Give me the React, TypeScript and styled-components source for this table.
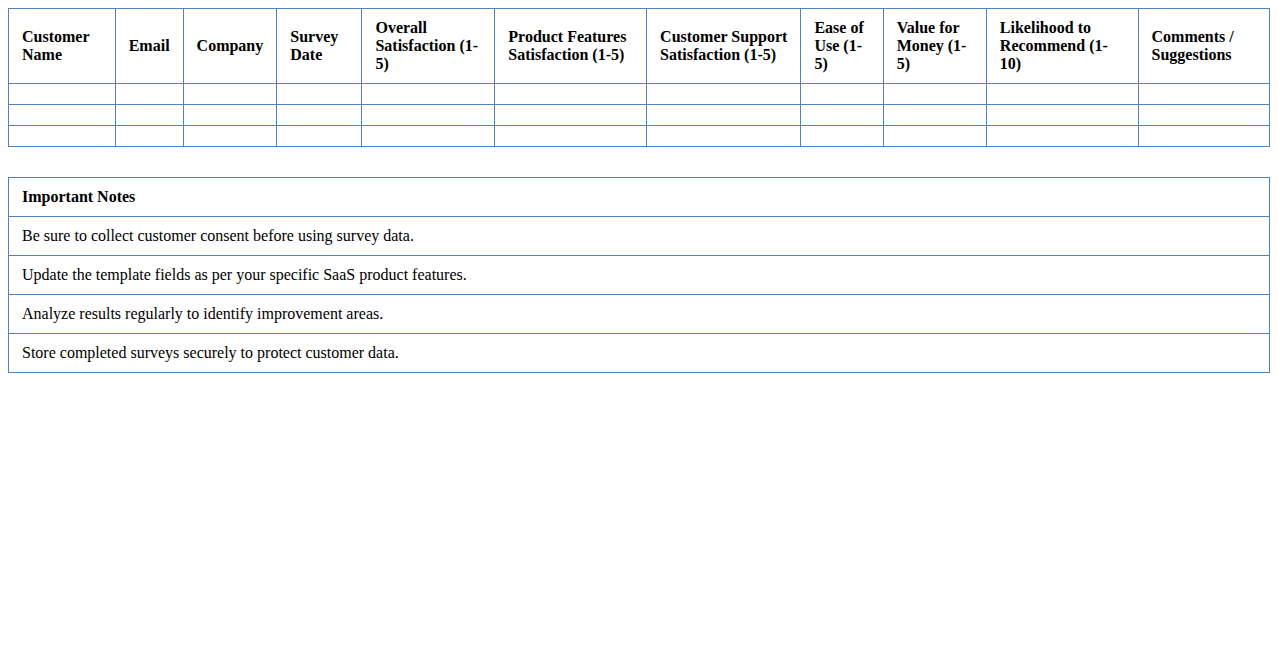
import React from 'react';
import styled, { createGlobalStyle } from 'styled-components';

const GlobalStyle = createGlobalStyle`
  body {
    margin: 8px;
    background: #ffffff;
    font-family: "Liberation Serif", "Times New Roman", serif;
    font-size: 16px;
    color: #000000;
  }
`;

const columns = [
  'Customer Name',
  'Email',
  'Company',
  'Survey Date',
  'Overall Satisfaction (1-5)',
  'Product Features Satisfaction (1-5)',
  'Customer Support Satisfaction (1-5)',
  'Ease of Use (1-5)',
  'Value for Money (1-5)',
  'Likelihood to Recommend (1-10)',
  'Comments / Suggestions',
];

const notes = [
  'Be sure to collect customer consent before using survey data.',
  'Update the template fields as per your specific SaaS product features.',
  'Analyze results regularly to identify improvement areas.',
  'Store completed surveys securely to protect customer data.',
];

const App: React.FC = () => {
  return (
    <>
      <GlobalStyle />
      <SurveyTable>
        <thead>
          <tr>
            {columns.map((c) => (
              <HeadCell key={c}>{c}</HeadCell>
            ))}
          </tr>
        </thead>
        <tbody>
          {[0, 1, 2].map((r) => (
            <tr key={r}>
              {columns.map((c) => (
                <Cell key={c} />
              ))}
            </tr>
          ))}
        </tbody>
      </SurveyTable>

      <NotesTable>
        <thead>
          <tr>
            <HeadCell>Important Notes</HeadCell>
          </tr>
        </thead>
        <tbody>
          {notes.map((n) => (
            <tr key={n}>
              <Cell>{n}</Cell>
            </tr>
          ))}
        </tbody>
      </NotesTable>
    </>
  );
};

const SurveyTable = styled.table`
  width: 100%;
  border-collapse: collapse;
  margin-bottom: 30px;
`;

const NotesTable = styled(SurveyTable)`
  margin-bottom: 0;
`;

const HeadCell = styled.th`
  border: 1px solid #4f81c7;
  padding: 10px 13px;
  text-align: left;
  vertical-align: middle;
  font-weight: bold;
  line-height: normal;
`;

const Cell = styled.td`
  border: 1px solid #4f81c7;
  padding: 10px 13px;
  text-align: left;
  font-weight: normal;
`;

export default App;
